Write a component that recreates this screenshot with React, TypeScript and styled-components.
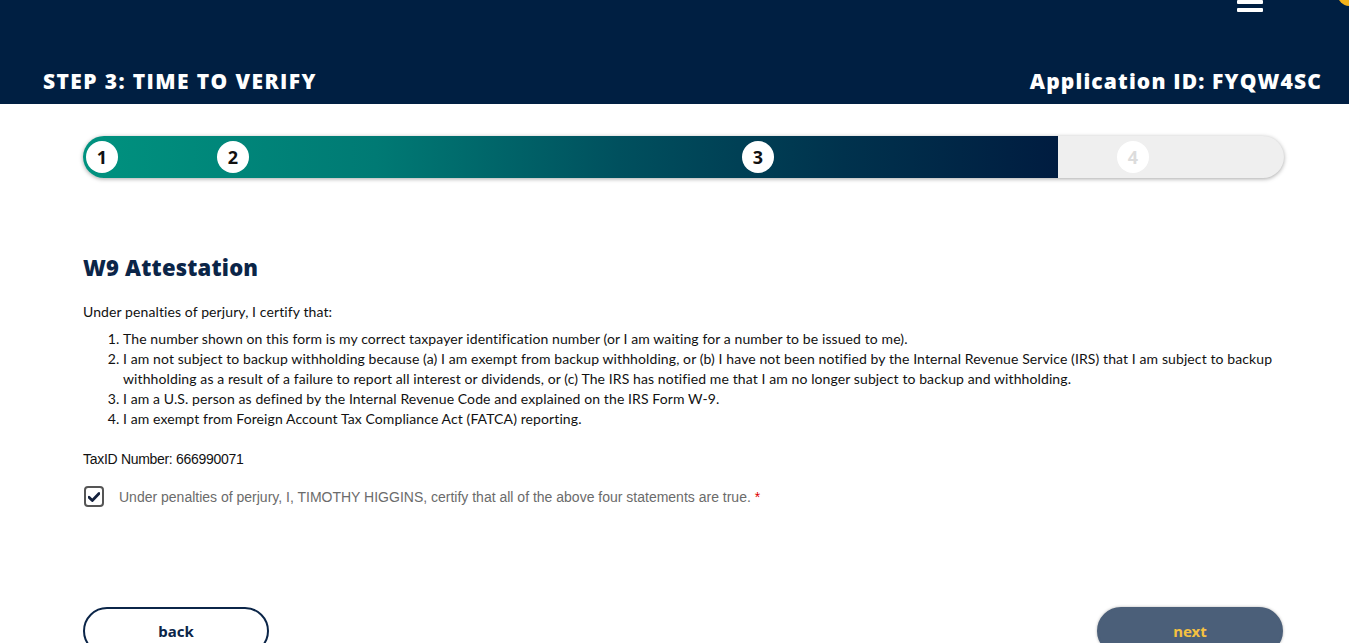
import React from "react";
import styled, { createGlobalStyle } from "styled-components";

const Global = createGlobalStyle`
  html, body { margin: 0; padding: 0; background: #fff; overflow: hidden; }
  * { box-sizing: border-box; }
`;

const Page = styled.div`
  width: 1349px;
  font-family: "Lato", "Noto Sans", sans-serif;
  color: #111;
`;

const Header = styled.header`
  position: relative;
  height: 104px;
  background: #001f42;
  display: flex;
  flex-direction: column;
  justify-content: space-between;
  padding: 0 27px 9px 43px;
  overflow: hidden;
`;

const TopRow = styled.div`
  display: flex;
  justify-content: flex-end;
  padding-right: 59px;
`;

const Burger = styled.div`
  width: 26px;
  margin-top: -8px;
  display: flex;
  flex-direction: column;
  gap: 4px;
  & > span { display: block; height: 4px; background: #fff; border-radius: 1px; }
`;

const Badge = styled.div`
  position: absolute;
  right: -14px;
  top: -20px;
  width: 26px;
  height: 26px;
  border-radius: 50%;
  background: #f5b31a;
`;

const TitleRow = styled.div`
  display: flex;
  justify-content: space-between;
  align-items: baseline;
`;

const HeadText = styled.h1<{ $wide?: boolean }>`
  margin: 0;
  font-family: "Open Sans", sans-serif;
  font-weight: 800;
  font-size: 21px;
  color: #fff;
  letter-spacing: ${(p) => (p.$wide ? "1.4px" : "1.15px")};
`;

const Main = styled.main`
  padding: 32px 65px 0 83px;
`;

const Track = styled.div`
  position: relative;
  height: 42px;
  border-radius: 21px;
  background: #efefef;
  box-shadow: 0 1px 4px rgba(0, 0, 0, 0.35);
  overflow: hidden;
`;

const Fill = styled.div`
  height: 100%;
  background: linear-gradient(90deg, #00927f 0%, #007a74 30%, #00505e 55%, #00324d 78%, #001c40 100%);
`;

const StepDot = styled.div<{ $done: boolean }>`
  position: absolute;
  top: 5px;
  width: 32px;
  height: 32px;
  margin-left: -16px;
  border-radius: 50%;
  background: #fff;
  display: flex;
  align-items: center;
  justify-content: center;
  font-family: "Noto Sans", sans-serif;
  font-weight: 700;
  font-size: 18px;
  color: ${(p) => (p.$done ? "#111" : "#dcdcdc")};
`;

const Title = styled.h2`
  margin: 74px 0 0;
  font-family: "Open Sans", sans-serif;
  font-weight: 800;
  font-size: 22px;
  color: #0b2548;
  letter-spacing: 0.2px;
`;

const Para = styled.p`
  margin: 20px 0 0;
  font-size: 14px;
  line-height: 20px;
  letter-spacing: 0.1px;
`;

const List = styled.ol`
  margin: 7px 0 0;
  padding-left: 40px;
  font-size: 14px;
  line-height: 20px;
  letter-spacing: 0.1px;
`;

const TaxLine = styled.p`
  margin: 20px 0 0;
  font-family: "Liberation Sans", sans-serif;
  font-size: 14px;
  line-height: 20px;
  letter-spacing: -0.3px;
`;

const CheckRow = styled.label`
  margin-top: 17px;
  display: flex;
  align-items: center;
  gap: 15px;
  padding-left: 1px;
`;

const Box = styled.span`
  width: 20px;
  height: 21px;
  border: 2px solid #555;
  border-radius: 4px;
  display: flex;
  align-items: center;
  justify-content: center;
`;

const CheckText = styled.span`
  font-family: "Liberation Sans", sans-serif;
  font-size: 14px;
  color: #6b6b6b;
  letter-spacing: 0px;
  & > b { color: #d00; font-weight: 400; margin-left: 4px; }
`;

const Buttons = styled.div`
  margin-top: 100px;
  display: flex;
  justify-content: space-between;
  padding-right: 1px;
`;

const Btn = styled.button<{ $primary?: boolean }>`
  width: 186px;
  height: 48px;
  border-radius: 24px;
  border: 2px solid ${(p) => (p.$primary ? "#4b5f79" : "#0b2548")};
  background: ${(p) => (p.$primary ? "#4b5f79" : "#fff")};
  color: ${(p) => (p.$primary ? "#f5c141" : "#0b2548")};
  font-family: "Noto Sans", sans-serif;
  font-weight: 700;
  font-size: 15px;
  padding: 0;
  box-shadow: ${(p) => (p.$primary ? "0 0 3px rgba(0,0,0,0.3)" : "none")};
`;

const steps = [
  { n: 1, x: 19, done: true },
  { n: 2, x: 150, done: true },
  { n: 3, x: 675, done: true },
  { n: 4, x: 1050, done: false },
];

export default function App() {
  return (
    <Page>
      <Global />
      <Header>
        <Badge />
        <TopRow>
          <Burger>
            <span />
            <span />
            <span />
          </Burger>
        </TopRow>
        <TitleRow>
          <HeadText $wide>STEP 3: TIME TO VERIFY</HeadText>
          <HeadText>Application ID: FYQW4SC</HeadText>
        </TitleRow>
      </Header>
      <Main>
        <Track>
          <Fill style={{ width: `${(975 / 1201) * 100}%` }} />
          {steps.map((s) => (
            <StepDot key={s.n} $done={s.done} style={{ left: s.x }}>
              {s.n}
            </StepDot>
          ))}
        </Track>
        <Title>W9 Attestation</Title>
        <Para>Under penalties of perjury, I certify that:</Para>
        <List>
          <li>The number shown on this form is my correct taxpayer identification number (or I am waiting for a number to be issued to me).</li>
          <li>
            I am not subject to backup withholding because (a) I am exempt from backup withholding, or (b) I have not been notified by the Internal Revenue Service (IRS) that I am subject to backup withholding as a result of a failure to report all interest or dividends, or (c) The IRS has notified me that I am no longer subject to backup and withholding.
          </li>
          <li>I am a U.S. person as defined by the Internal Revenue Code and explained on the IRS Form W-9.</li>
          <li>I am exempt from Foreign Account Tax Compliance Act (FATCA) reporting.</li>
        </List>
        <TaxLine>TaxID Number: 666990071</TaxLine>
        <CheckRow>
          <Box>
            <svg width="12" height="10" viewBox="0 0 12 10">
              <path d="M1 5.2 L4.3 8.4 L11 1.6" fill="none" stroke="#14213d" strokeWidth="2.8" strokeLinecap="round" strokeLinejoin="round" />
            </svg>
          </Box>
          <CheckText>
            Under penalties of perjury, I, TIMOTHY HIGGINS, certify that all of the above four statements are true.<b>*</b>
          </CheckText>
        </CheckRow>
        <Buttons>
          <Btn>back</Btn>
          <Btn $primary>next</Btn>
        </Buttons>
      </Main>
    </Page>
  );
}
